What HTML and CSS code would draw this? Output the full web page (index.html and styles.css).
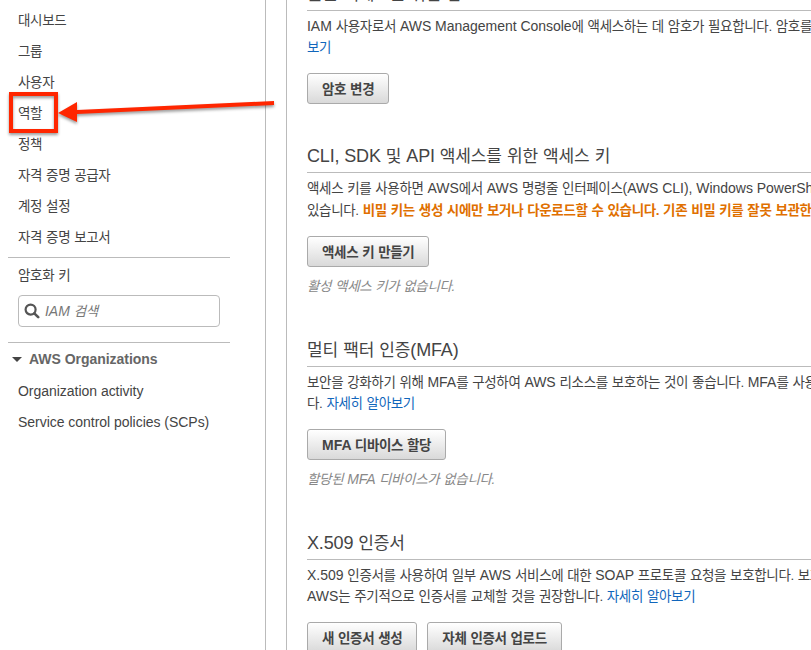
FILE: index.html
```html
<!DOCTYPE html>
<html lang="ko">
<head>
<meta charset="utf-8">
<title>IAM</title>
<link rel="stylesheet" href="styles.css">
</head>
<body>
<div class="page">
  <aside class="sidebar">
    <ul class="nav">
      <li>대시보드</li>
      <li>그룹</li>
      <li>사용자</li>
      <li>역할</li>
      <li>정책</li>
      <li>자격 증명 공급자</li>
      <li>계정 설정</li>
      <li>자격 증명 보고서</li>
    </ul>
    <div class="tools">
      <div class="keys">암호화 키</div>
      <div class="search">
        <svg width="16" height="16" viewBox="0 0 16 16"><circle cx="6.6" cy="6.6" r="5" fill="none" stroke="#555" stroke-width="2.2"/><path d="M10.3 10.3L14.2 14.2" stroke="#555" stroke-width="2.6" stroke-linecap="round"/></svg>
        <span><span class="en">IAM </span>검색</span>
      </div>
    </div>
    <div class="orgs">
      <div class="orgs-title"><i class="caret"></i><b class="en">AWS Organizations</b></div>
      <ul class="nav">
        <li class="en">Organization activity</li>
        <li class="en">Service control policies (SCPs)</li>
      </ul>
    </div>
  </aside>
  <div class="gutter"></div>
  <main class="content">
    <section class="first">
      <h2>콘솔 액세스를 위한 암호</h2>
      <p><span class="en">IAM </span>사용자로서 <span class="en">AWS Management Console</span>에 액세스하는 데 암호가 필요합니다. 암호를<br><a>보기</a></p>
      <div class="actions"><button>암호 변경</button></div>
    </section>
    <section class="keys-section">
      <h2><span class="en">CLI, SDK </span>및 <span class="en">API </span>액세스를 위한 액세스 키</h2>
      <p>액세스 키를 사용하면 <span class="en">AWS</span>에서 <span class="en">AWS </span>명령줄 인터페이스<span class="en">(AWS CLI), Windows PowerShell</span><br>있습니다. <strong>비밀 키는 생성 시에만 보거나 다운로드할 수 있습니다. 기존 비밀 키를 잘못 보관한</strong></p>
      <div class="actions"><button>액세스 키 만들기</button></div>
      <div class="note">활성 액세스 키가 없습니다.</div>
    </section>
    <section>
      <h2>멀티 팩터 인증<span class="en">(MFA)</span></h2>
      <p>보안을 강화하기 위해 <span class="en">MFA</span>를 구성하여 <span class="en">AWS </span>리소스를 보호하는 것이 좋습니다. <span class="en">MFA</span>를 사용<br>다. <a>자세히 알아보기</a></p>
      <div class="actions"><button><span class="en">MFA </span>디바이스 할당</button></div>
      <div class="note">할당된 <span class="en">MFA </span>디바이스가 없습니다.</div>
    </section>
    <section>
      <h2><span class="en">X.509 </span>인증서</h2>
      <p><span class="en">X.509 </span>인증서를 사용하여 일부 <span class="en">AWS </span>서비스에 대한 <span class="en">SOAP </span>프로토콜 요청을 보호합니다. 보호<br><span class="en">AWS</span>는 주기적으로 인증서를 교체할 것을 권장합니다. <a>자세히 알아보기</a></p>
      <div class="actions"><button>새 인증서 생성</button><button>자체 인증서 업로드</button></div>
    </section>
  </main>
  <svg class="callout" width="290" height="150" viewBox="0 0 290 150">
    <rect x="11" y="94" width="45" height="37" fill="none" stroke="#ff2600" stroke-width="4"/>
    <path d="M274 101L77 110V102L58 113L77 122V114L274 105Z" fill="#ff2600"/>
  </svg>
</div>
</body>
</html>
```
FILE: styles.css
```css
* { box-sizing: border-box; }
body {
  margin: 0;
  background: #fff;
  color: #444;
  font-family: "Liberation Sans", "Noto Sans CJK KR", sans-serif;
  font-size: 13.5px;
  letter-spacing: -0.34px;
  word-spacing: 0.5px;
}
.en {
  font-size: 14px;
  letter-spacing: -0.03px;
  word-spacing: 0;
}
.page {
  position: relative;
  display: flex;
  width: 811px;
  height: 650px;
  overflow: hidden;
  white-space: nowrap;
}
.sidebar {
  width: 265px;
  flex: none;
  padding: 5px 35px 0 8px;
}
.nav {
  list-style: none;
  margin: 0;
  padding: 0 0 0 10px;
}
.nav li {
  height: 31px;
  line-height: 31px;
}
.sidebar > .nav { height: 252px; }
.tools {
  border-top: 1px solid #bbb;
  height: 85px;
  padding: 3px 10px 0;
}
.keys {
  height: 34px;
  line-height: 29px;
}
.search {
  display: flex;
  align-items: center;
  gap: 5px;
  width: 202px;
  height: 32px;
  padding-left: 5px;
  border: 1px solid #bbb;
  border-radius: 4px;
  color: #777;
  font-style: italic;
}
.search > span { padding-bottom: 2px; }
.orgs { border-top: 1px solid #bbb; }
.orgs-title {
  display: flex;
  align-items: center;
  gap: 7px;
  height: 33px;
  padding: 0 0 1px 4px;
  color: #666;
}
.caret {
  margin-top: 1px;
  border: 5px solid transparent;
  border-top-color: #444;
  border-bottom: 0;
}
.gutter {
  flex: none;
  width: 22px;
  border: 1px solid #bbb;
  border-width: 0 1px;
}
.content {
  flex: 1;
  min-width: 0;
  padding-left: 20px;
  overflow: hidden;
}
section { padding-bottom: 40px; }
.first {
  margin-top: -19px;
  padding-bottom: 39px;
}
h2 {
  height: 30px;
  margin: 0;
  border-bottom: 1px solid #bbb;
  font-size: 17px;
  font-weight: 400;
  letter-spacing: -0.12px;
  line-height: 26px;
}
.first h2 { line-height: 28px; }
h2 .en {
  font-size: 18px;
  letter-spacing: -0.15px;
}
p {
  height: 42px;
  margin: 5px 0 15px;
  line-height: 21px;
}
.keys-section p {
  height: 43px;
  line-height: 21.5px;
}
a { color: #1166bb; }
strong { color: #e07000; }
.actions {
  display: flex;
  gap: 10px;
}
button {
  height: 31px;
  padding: 0 14px 2px;
  border: 1px solid #aaa;
  border-radius: 3px;
  background: linear-gradient(#fff, #d9d9d9);
  color: #444;
  font: inherit;
  font-weight: 700;
  letter-spacing: inherit;
  word-spacing: inherit;
}
.note {
  height: 21px;
  margin-top: 9px;
  color: #888;
  font-style: italic;
  line-height: 21px;
}
.callout {
  position: absolute;
  left: 0;
  top: 0;
  filter: drop-shadow(0 2px 1.5px rgba(0, 0, 0, 0.4));
}
```
